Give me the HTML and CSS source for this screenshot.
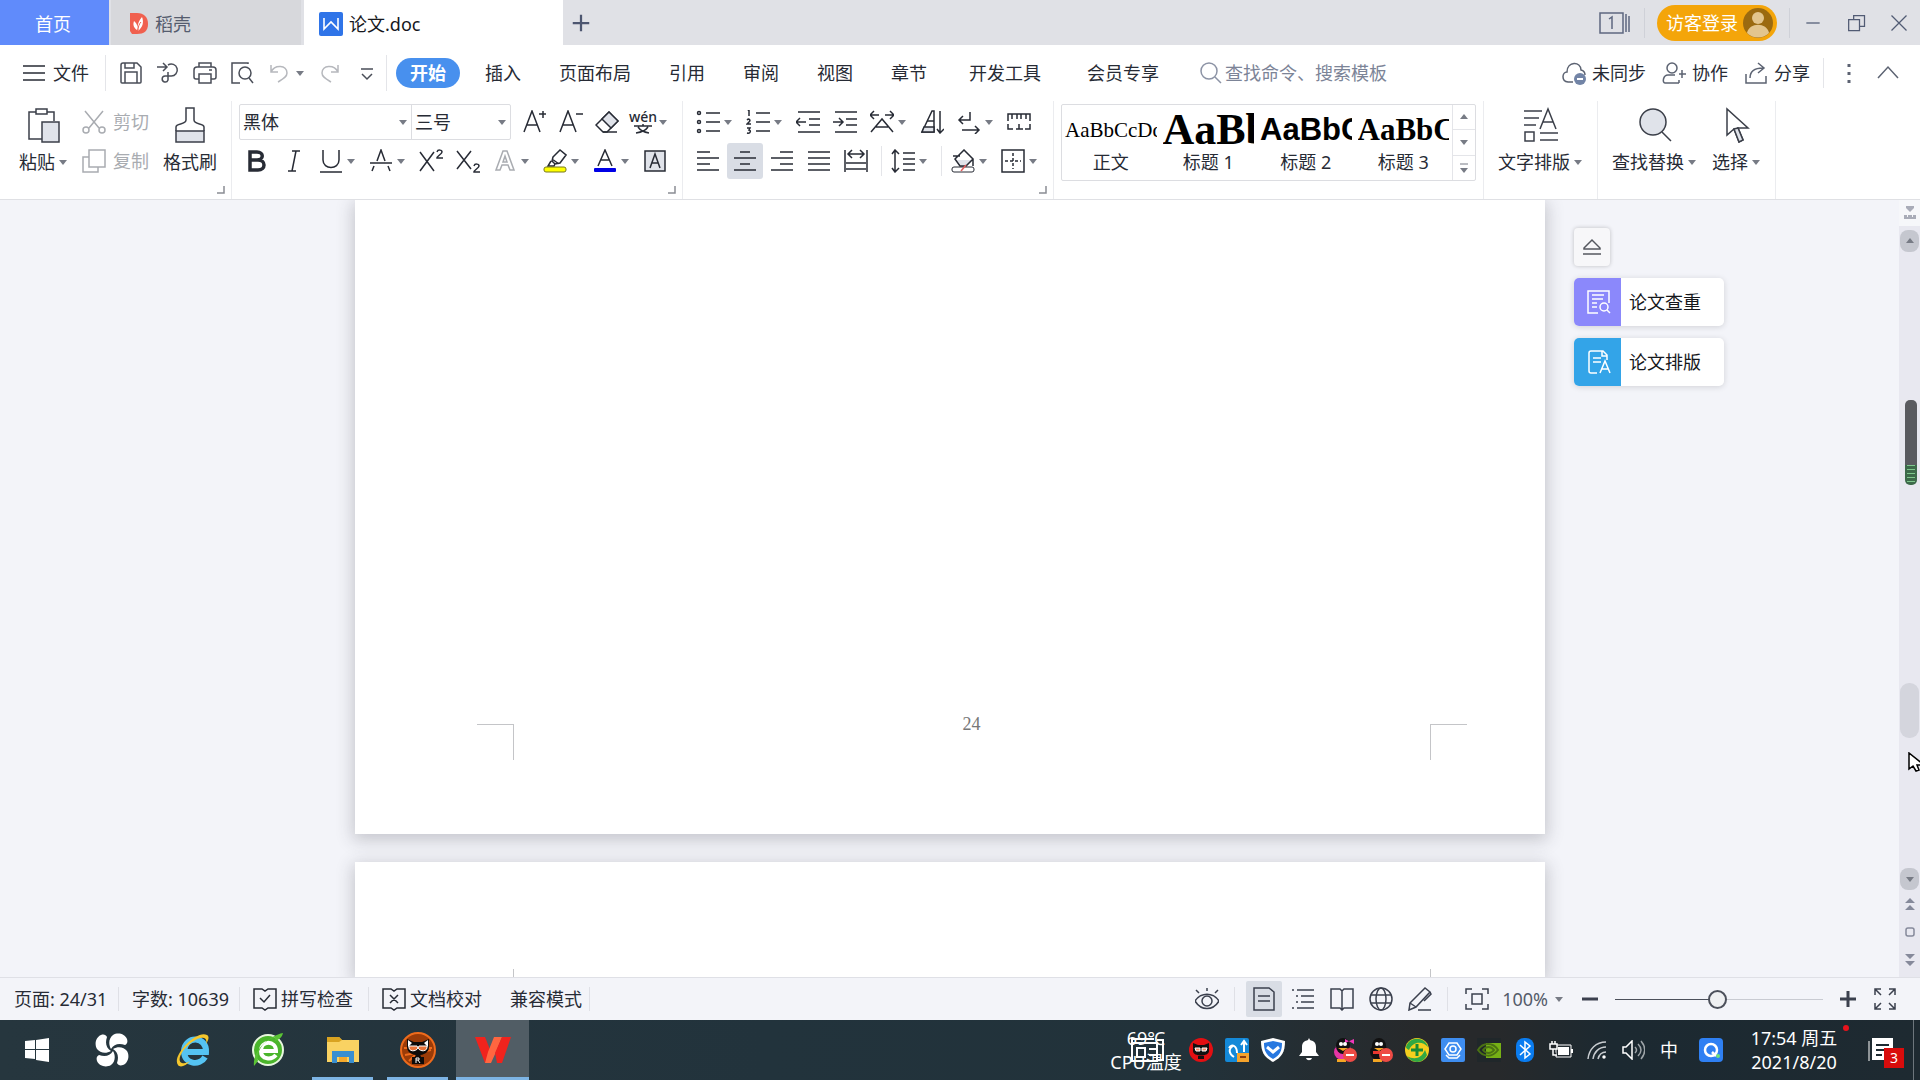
FILE: index.html
```html
<!DOCTYPE html>
<html lang="zh-CN">
<head>
<meta charset="utf-8">
<title>论文.doc</title>
<link rel="stylesheet" href="styles.css">
</head>
<body>
<svg class="defs" aria-hidden="true">
  <symbol id="caret" viewBox="0 0 10 10"><path d="M1 3h8L5 8z" fill="#777b85"/></symbol>
  <symbol id="corner" viewBox="0 0 8 8"><path d="M7 0v7H0" fill="none" stroke="#8a8d94" stroke-width="1.5"/></symbol>
</svg>

<header class="titlebar">
  <button class="tab tab-home">首页</button>
  <button class="tab tab-shell">
    <svg width="20" height="24" viewBox="0 0 20 24"><path d="M1 1h7c7 0 11 4 11 11s-4 10-11 10H3L1 19z" fill="#f0604f"/><path d="M8 18c-4-3-4-6-3-9 3 3 4 5 3 9zm1 1c-1-5 0-9 4-14 2 5 1 10-4 14z" fill="#fff"/><path d="M9 19c0-4 1-7 3-9" fill="none" stroke="#f0604f"/></svg>
    <span>稻壳</span>
  </button>
  <button class="tab tab-doc">
    <svg width="24" height="24" viewBox="0 0 24 24"><rect width="24" height="24" rx="2" fill="#2f74e8"/><path d="M5 6v11l7-7 7 7V6" fill="none" stroke="#fff" stroke-width="1.6"/></svg>
    <span>论文.doc</span>
  </button>
  <button class="tab-add" aria-label="新建"><svg class="i" viewBox="0 0 24 24"><path d="M12 1v22M1 12h22" stroke-width="3"/></svg></button>
  <div class="window-tools">
    <button class="count" aria-label="窗口"><svg width="32" height="22" viewBox="0 0 32 22" fill="none" stroke="#5d6780" stroke-width="1.5"><path d="M1 1h23v20H1zM27 2v18M30 4v16M10 7l3-2v12"/></svg></button>
    <button class="login"><span>访客登录</span><svg width="30" height="30" viewBox="0 0 30 30"><circle cx="15" cy="15" r="15" fill="#9b6a10"/><circle cx="15" cy="10" r="6" fill="#e3c58d"/><path d="M4 25c2-11 20-11 22 0-6 6-16 6-22 0z" fill="#e3c58d"/></svg></button>
    <button class="win" aria-label="最小化"><svg class="i" viewBox="0 0 24 24"><path d="M4 12h16"/></svg></button>
    <button class="win" aria-label="还原"><svg class="i" viewBox="0 0 24 24"><path d="M2 8h13v13H2zM8 8V3h13v13h-6"/></svg></button>
    <button class="win" aria-label="关闭"><svg class="i" viewBox="0 0 24 24"><path d="M3 3l18 18M21 3L3 21"/></svg></button>
  </div>
</header>

<nav class="menubar">
  <button class="file"><svg class="i" viewBox="0 0 24 24"><path d="M1 5h22M1 12h22M1 19h22"/></svg><span>文件</span></button>
  <div class="quick">
    <button aria-label="保存"><svg class="i" viewBox="0 0 24 24"><path d="M4 2h14l4 4v15a1 1 0 0 1-1 1H3a1 1 0 0 1-1-1V4a2 2 0 0 1 2-2zM6 22V11h12v11M6 2v5h9V2"/></svg></button>
    <button aria-label="输出"><svg class="i" viewBox="0 0 24 24"><path d="M1 6h9M7 2l4 4-4 4M9 15h6a6 6 0 1 0-3-11M12 11v8a3 3 0 1 1-3-4"/></svg></button>
    <button aria-label="打印"><svg class="i" viewBox="0 0 24 24"><path d="M6 6V2h12v4M6 18H3a2 2 0 0 1-2-2V9a3 3 0 0 1 3-3h16a3 3 0 0 1 3 3v7a2 2 0 0 1-2 2h-3M6 13h12v9H6zM16 9h3"/></svg></button>
    <button aria-label="预览"><svg class="i" viewBox="0 0 24 24"><path d="M18 3V2H2v20h8"/><circle cx="15" cy="12" r="6"/><path d="M19 17l4 5"/></svg></button>
    <button class="dim" aria-label="撤销"><svg class="i" viewBox="0 0 24 24"><path d="M4 4v7h7M4 11c4-8 16-7 16 1 0 4-4 6-9 9"/></svg><svg class="c"><use href="#caret"/></svg></button>
    <button class="dim" aria-label="恢复"><svg class="i" viewBox="0 0 24 24"><path d="M20 4v7h-7M20 11c-4-8-16-7-16 1 0 4 4 6 9 9"/></svg></button>
    <button aria-label="更多"><svg class="i" viewBox="0 0 24 24"><path d="M6 8h12M7 13l5 5 5-5"/></svg></button>
  </div>
  <div class="menus">
    <button class="menu active">开始</button>
    <button class="menu">插入</button>
    <button class="menu">页面布局</button>
    <button class="menu">引用</button>
    <button class="menu">审阅</button>
    <button class="menu">视图</button>
    <button class="menu">章节</button>
    <button class="menu wide">开发工具</button>
    <button class="menu wide">会员专享</button>
  </div>
  <label class="search"><svg width="22" height="24" viewBox="0 0 22 24" fill="none" stroke="#8c93a5" stroke-width="1.5"><circle cx="9" cy="10" r="8"/><path d="M15 16l6 6"/></svg><input type="text" placeholder="查找命令、搜索模板" aria-label="搜索"></label>
  <div class="share">
    <button><svg class="i" viewBox="0 0 24 24"><path d="M11 21H6C-1 20 0 11 5 11 5 0 19 0 19 9c4 1 4 4 4 5"/><circle cx="18" cy="18" r="6" fill="#7284a6" stroke="none"/><path d="M15 18h6" stroke="#fff" stroke-width="2"/></svg><span>未同步</span></button>
    <button><svg class="i" viewBox="0 0 24 24"><circle cx="10" cy="7" r="5"/><path d="M17 22H3c-3 0-2-8 3-8h7M17 13h7M20 9v8M17 19v3"/></svg><span>协作</span></button>
    <button><svg class="i" viewBox="0 0 24 24"><path d="M2 13v9h20v-7M6 17c0-7 5-10 13-10M14 2l6 5-6 5"/></svg><span>分享</span></button>
  </div>
  <button class="more" aria-label="更多选项"><svg class="i" viewBox="0 0 24 24"><path d="M12 3v3M12 11v3M12 19v3" stroke-width="3"/></svg></button>
  <button class="fold" aria-label="收起"><svg class="i" viewBox="0 0 24 24"><path d="M2 17L12 6l10 11"/></svg></button>
</nav>

<section class="ribbon">
  <div class="group g-clip">
    <button class="big"><svg class="bi" viewBox="0 0 36 36"><path d="M12 5H3v27h14M20 5h8v9"/><path d="M10 2h11v5H10z" fill="#fff"/><path d="M16 15h17v20H16z" fill="#e0e3ea"/></svg><span>粘贴<svg class="c"><use href="#caret"/></svg></span></button>
    <div class="pair">
      <button class="line dim"><svg class="i" viewBox="0 0 24 24"><path d="M3 1l14 17M21 1L7 18"/><circle cx="4" cy="20" r="3"/><circle cx="20" cy="20" r="3"/></svg><span>剪切</span></button>
      <button class="line dim"><svg class="i" viewBox="0 0 24 24"><path d="M7 1h16v17H7zM7 8H1v15h15v-5"/></svg><span>复制</span></button>
    </div>
    <button class="big"><svg class="bi" viewBox="0 0 36 36"><path d="M4 24h28v11H4z" fill="#e0e3ea"/><path d="M4 24v-4c0-4 10-2 10-7V1h8v12c0 5 10 3 10 7v4"/></svg><span>格式刷</span></button>
    <svg class="launch"><use href="#corner"/></svg>
  </div>
  <div class="group g-font">
    <div class="row tight">
      <div class="fontbox">
        <label class="sel sel-name"><select aria-label="字体"><option>黑体</option></select><svg class="c"><use href="#caret"/></svg></label>
        <label class="sel sel-size"><select aria-label="字号"><option>三号</option></select><svg class="c"><use href="#caret"/></svg></label>
      </div>
      <button class="ib" aria-label="增大"><svg class="i" viewBox="0 0 24 24"><path d="M1 22L9 1l8 21M4 15h10M16 4h7M20 1v7"/></svg></button>
      <button class="ib" aria-label="减小"><svg class="i" viewBox="0 0 24 24"><path d="M1 22L9 1l8 21M4 15h10M17 4h7"/></svg></button>
      <button class="ib" aria-label="清除"><svg class="i" viewBox="0 0 24 24"><path d="M1 15L14 2l9 9-11 11H8z"/><path d="M7 9l7-7 9 9-7 7z" fill="#e0e3ea"/><path d="M8 22h14"/></svg></button>
      <button class="ib" aria-label="拼音"><span class="pinyin"><b>wén</b><svg width="18" height="10" viewBox="0 0 18 10" fill="none" stroke="#272b35" stroke-width="1.5"><path d="M0 2h18M9 0v2M4 3c2 3 5 5 11 6M14 3C12 6 9 8 2 9"/></svg></span><svg class="c"><use href="#caret"/></svg></button>
    </div>
    <div class="row under">
      <button class="ib" aria-label="加粗"><svg class="i" viewBox="0 0 24 24"><path d="M5 3h7c7 0 7 8 0 8H5zM5 11h8c8 0 8 10 0 10H5z" stroke-width="3.5"/></svg></button>
      <button class="ib" aria-label="倾斜"><svg class="i" viewBox="0 0 24 24"><path d="M10 2h8M6 22h8M14 2l-4 20"/></svg></button>
      <button class="ib" aria-label="下划线"><svg class="i" viewBox="0 0 24 24"><path d="M4 1v10c0 10 16 10 16 0V1M1 23h22"/></svg><svg class="c"><use href="#caret"/></svg></button>
      <button class="ib" aria-label="删除线"><svg class="i" viewBox="0 0 24 24"><path d="M8 12l4-11 4 11M5 17l-2 5M19 17l2 5M1 14h22"/></svg><svg class="c"><use href="#caret"/></svg></button>
      <button class="ib" aria-label="上标"><svg class="i" viewBox="0 0 24 24"><path d="M1 3l14 19M15 3L1 22M18 3c1-3 5-2 5 0s-5 4-5 6h6"/></svg></button>
      <button class="ib" aria-label="下标"><svg class="i" viewBox="0 0 24 24"><path d="M1 2l14 18M15 2L1 20M18 17c1-3 5-2 5 0s-5 4-5 6h6"/></svg></button>
      <button class="ib dim" aria-label="文字效果"><svg class="i" viewBox="0 0 24 24"><path d="M3 21L10 2h4l7 19h-4l-2-5H9l-2 5zM10 13h4l-2-6z"/></svg><svg class="c"><use href="#caret"/></svg></button>
      <button class="ib" aria-label="突出显示"><svg class="i" viewBox="0 0 24 24"><path d="M10 8l7-7 6 5-6 8-5 1-3-3zM9 10l7 5M8 12l-3 5h6l1-2"/><rect x="1" y="18" width="22" height="5" rx="2" fill="#ff0" stroke="#77791f" stroke-width="1"/></svg><svg class="c"><use href="#caret"/></svg></button>
      <button class="ib" aria-label="字体颜色"><svg class="i" viewBox="0 0 24 24"><path d="M5 17l7-16 7 16M8 11h8"/><rect x="1" y="19" width="22" height="4" rx="1" fill="#0000e6" stroke="none"/></svg><svg class="c"><use href="#caret"/></svg></button>
      <button class="ib" aria-label="字符底纹"><svg class="i" viewBox="0 0 24 24"><path d="M2 2h20v20H2z" fill="#e0e3ea"/><path d="M7 19l5-14 5 14M9 14h6"/></svg></button>
    </div>
    <svg class="launch"><use href="#corner"/></svg>
  </div>
  <div class="group g-para">
    <div class="row">
      <button class="ib" aria-label="项目符号"><svg class="i" viewBox="0 0 24 24"><path d="M10 3h14M10 12h14M10 21h14"/><circle cx="3" cy="3" r="1.5"/><circle cx="3" cy="12" r="1.5"/><circle cx="3" cy="21" r="1.5"/></svg><svg class="c"><use href="#caret"/></svg></button>
      <button class="ib" aria-label="编号"><svg class="i" viewBox="0 0 24 24"><path d="M10 3h14M10 12h14M10 21h14M2 1l1-1v6M1 10c2-2 4 0 2 2l-2 2h4M1 18h3l-1 2c2 0 2 4-2 3"/></svg><svg class="c"><use href="#caret"/></svg></button>
      <button class="ib" aria-label="减少缩进"><svg class="i" viewBox="0 0 24 24"><path d="M2 2h22M13 9h11M13 15h11M2 22h22M0 12h10M4 8l-4 4 4 4"/></svg></button>
      <button class="ib" aria-label="增加缩进"><svg class="i" viewBox="0 0 24 24"><path d="M2 2h22M13 9h11M13 15h11M2 22h22M0 12h9M6 8l4 4-4 4"/></svg></button>
      <button class="ib" aria-label="中文版式"><svg class="i" viewBox="0 0 24 24"><path d="M0 5h9M4 1L0 5l4 4M24 5h-9M20 1l4 4-4 4M1 22L12 9l11 13M6 17h12"/></svg><svg class="c"><use href="#caret"/></svg></button>
      <button class="ib" aria-label="排序"><svg class="i" viewBox="0 0 24 24"><path d="M2 22L12 1h2v21z"/><path d="M4 17h10v5H2z" fill="#e0e3ea"/><path d="M7 11h7M20 1v21M17 19l3 4 4-4"/></svg></button>
      <button class="ib" aria-label="换行"><svg class="i" viewBox="0 0 24 24"><path d="M13 2v8H2M6 6l-4 4 4 4M5 20h17M18 16l4 4-4 4"/></svg><svg class="c"><use href="#caret"/></svg></button>
      <button class="ib" aria-label="制表位"><svg class="i" viewBox="0 0 24 24"><path d="M1 11V4h22v7M5 4v5M10 4v5M14 4v5M19 4v5M1 14v5h5M9 19h7M12 14v5M18 19h5v-5"/></svg></button>
    </div>
    <div class="row">
      <button class="ib" aria-label="左对齐"><svg class="i" viewBox="0 0 24 24"><path d="M1 3h13M1 9h22M1 15h13M1 21h22"/></svg></button>
      <button class="ib on" aria-label="居中"><svg class="i" viewBox="0 0 24 24"><path d="M7 3h10M1 9h22M7 15h10M1 21h22"/></svg></button>
      <button class="ib" aria-label="右对齐"><svg class="i" viewBox="0 0 24 24"><path d="M10 3h13M1 9h22M10 15h13M1 21h22"/></svg></button>
      <button class="ib" aria-label="两端对齐"><svg class="i" viewBox="0 0 24 24"><path d="M1 3h22M1 9h22M1 15h22M1 21h22"/></svg></button>
      <button class="ib" aria-label="分散对齐"><svg class="i" viewBox="0 0 24 24"><path d="M1 1v22M23 1v22M5 5h14M8 1L4 5l4 4M16 1l4 4-4 4M2 14h20M2 20h20"/></svg></button>
      <i class="bar"></i>
      <button class="ib" aria-label="行距"><svg class="i" viewBox="0 0 24 24"><path d="M4 1v22M1 5l3-4 4 4M1 19l3 4 4-4M12 4h12M12 10h12M12 15h12M12 21h12"/></svg><svg class="c"><use href="#caret"/></svg></button>
      <i class="bar"></i>
      <button class="ib" aria-label="底纹"><svg class="i" viewBox="0 0 24 24"><path d="M6 11h16l-7 7h-4z" fill="#e0e3ea" stroke="none"/><path d="M2 7h7M4 10l9-9 9 9-7 7H9zM22 10v7"/><rect x="1" y="18" width="22" height="5" rx="2" stroke-width="1"/><path d="M10 22l5-6" stroke="#e06060"/></svg><svg class="c"><use href="#caret"/></svg></button>
      <button class="ib" aria-label="边框"><svg class="i" viewBox="0 0 24 24"><path d="M1 1h22v22H1z"/><path d="M12 4v16M4 12h16" stroke-dasharray="3 2"/></svg><svg class="c"><use href="#caret"/></svg></button>
    </div>
    <svg class="launch"><use href="#corner"/></svg>
  </div>
  <div class="group g-style">
    <div class="gallery">
      <button class="style"><span class="sample s-body">AaBbCcDd</span><span>正文</span></button>
      <button class="style"><span class="sample s-h1">AaBb</span><span>标题 1</span></button>
      <button class="style"><span class="sample s-h2">AaBbC</span><span>标题 2</span></button>
      <button class="style"><span class="sample s-h3">AaBbC</span><span>标题 3</span></button>
      <div class="spin">
        <button aria-label="上一行"><svg class="c flip"><use href="#caret"/></svg></button>
        <button aria-label="下一行"><svg class="c"><use href="#caret"/></svg></button>
        <button aria-label="展开"><svg width="10" height="12" viewBox="0 0 10 12"><path d="M1 2h8" stroke="#777b85"/><path d="M1 6h8l-4 5z" fill="#777b85"/></svg></button>
      </div>
    </div>
  </div>
  <div class="group g-tools">
    <button class="big"><svg class="bi" viewBox="0 0 36 36"><path d="M1 4h18M1 11h15M1 18h12M17 22l8-20 8 20M20 15h10M2 25h9v9H2zM17 26h18M17 33h18"/></svg><span>文字排版<svg class="c"><use href="#caret"/></svg></span></button>
  </div>
  <div class="group g-tools">
    <button class="big"><svg class="bi" viewBox="0 0 36 36"><circle cx="16" cy="15" r="13" fill="#e0e3ea"/><path d="M25 25l9 9"/></svg><span>查找替换<svg class="c"><use href="#caret"/></svg></span></button>
    <button class="big"><svg class="bi" viewBox="0 0 36 36"><path d="M8 2v26l7-6 5 13 4-2-5-12h10z" fill="#fff"/><path d="M15 22l4-1 5 12-4 2z" fill="#e0e3ea"/></svg><span>选择<svg class="c"><use href="#caret"/></svg></span></button>
  </div>
</section>

<main class="workspace">
  <div class="canvas">
    <article class="page first">
      <div class="page-foot"><i class="crop-left"></i><span>24</span><i class="crop-right"></i></div>
    </article>
    <article class="page second"><i></i></article>
    <aside class="float">
      <button class="eject" aria-label="收起"><svg width="20" height="20" viewBox="0 0 20 20" fill="none" stroke="#55585f" stroke-width="1.5"><path d="M2 11l8-8 8 8v1H2zM1 17h18"/></svg></button>
      <button class="card violet"><span class="badge"><svg class="i" viewBox="0 0 24 24"><path d="M11 23H1V1h21v12M5 5h12M5 9h11M5 13h5M5 17h5"/><circle cx="17" cy="17" r="4"/><path d="M20 20l3 3"/></svg></span><span>论文查重</span></button>
      <button class="card azure"><span class="badge"><svg class="i" viewBox="0 0 24 24"><path d="M10 23H4a2 2 0 0 1-2-2V3a2 2 0 0 1 2-2h12l4 4v5M15 1v5h5M6 8h8M6 12h8M13 23l5-12 5 12M15 19h6"/></svg></span><span>论文排版</span></button>
    </aside>
  </div>
  <div class="scroller">
    <button class="ruler" aria-label="标尺"><svg width="14" height="14" viewBox="0 0 14 14"><path d="M3 0h8v2L7 6 3 2zM1 9h3v2h1V9h4v2h1V9h3v4H1z" fill="#a9acb8"/></svg></button>
    <button class="pad" aria-label="向上"><svg class="c flip"><use href="#caret"/></svg></button>
    <div class="track"><i class="thumb"></i><i class="meter"></i>
      <svg class="cursor" width="12" height="20" viewBox="0 0 12 20"><path d="M1 1v16l4-3 3 5 3-1-2-5h7z" fill="#fff" stroke="#000" stroke-width="1.5"/></svg>
    </div>
    <button class="pad" aria-label="向下"><svg class="c"><use href="#caret"/></svg></button>
    <button class="jump" aria-label="上一页"><svg width="10" height="12" viewBox="0 0 10 12"><path d="M0 5l5-5 5 5zM0 12l5-5 5 5z" fill="#85899a"/></svg></button>
    <button class="jump" aria-label="选择对象"><svg width="10" height="10" viewBox="0 0 10 10"><rect x="1" y="1" width="8" height="8" rx="2" fill="none" stroke="#85899a" stroke-width="1.5"/></svg></button>
    <button class="jump" aria-label="下一页"><svg width="10" height="12" viewBox="0 0 10 12"><path d="M0 0l5 5 5-5zM0 7l5 5 5-5z" fill="#85899a"/></svg></button>
  </div>
</main>

<footer class="statusbar">
  <span class="stat s1">页面: 24/31</span>
  <span class="stat s2">字数: 10639</span>
  <button class="stat s3"><svg class="i" viewBox="0 0 24 24"><path d="M1 2h8l3 2 3-2h8v19h-8l-3 2-3-2H1zM7 11l4 4 6-7"/></svg><span>拼写检查</span></button>
  <button class="stat s4"><svg class="i" viewBox="0 0 24 24"><path d="M1 2h8l3 2 3-2h8v19h-8l-3 2-3-2H1zM8 8l8 8M16 8l-8 8"/></svg><span>文档校对</span></button>
  <span class="stat s5">兼容模式</span>
  <div class="views">
    <button class="v" aria-label="护眼"><svg class="i" viewBox="0 0 24 24"><path d="M0 14c6-9 18-9 24 0-6 10-18 10-24 0zM12 1v3M1 3l3 3M23 3l-3 3"/><circle cx="12" cy="14" r="5"/></svg></button>
    <i class="vs"></i>
    <button class="v on" aria-label="页面视图"><svg class="i" viewBox="0 0 24 24"><path d="M2 1h15l5 4v18H2zM6 9h12M6 14h12"/></svg></button>
    <button class="v" aria-label="大纲"><svg class="i" viewBox="0 0 24 24"><path d="M1 3h2M6 3h17M5 9h2M10 9h13M5 15h2M10 15h13M1 21h2M6 21h17"/></svg></button>
    <button class="v" aria-label="阅读"><svg class="i" viewBox="0 0 24 24"><path d="M1 2h9l2 2 2-2h9v19h-9l-2 2-2-2H1zM12 4v18"/></svg></button>
    <button class="v" aria-label="网页"><svg class="i" viewBox="0 0 24 24"><circle cx="12" cy="12" r="11"/><ellipse cx="12" cy="12" rx="5" ry="11"/><path d="M2 8h20M2 16h20"/></svg></button>
    <button class="v" aria-label="批注"><svg class="i" viewBox="0 0 24 24"><path d="M2 16L17 1l5 4L8 20l-7 3zM2 16l6 4M10 23h13M22 5l1 2-7 7"/></svg></button>
    <i class="vs"></i>
    <button class="v" aria-label="适应"><svg class="i" viewBox="0 0 24 24"><path d="M1 7V2h6M17 2h6v5M23 17v5h-6M7 22H1v-5M7 7h10v10H7z"/></svg></button>
    <button class="zoom">100%<svg class="c"><use href="#caret"/></svg></button>
    <button class="z" aria-label="缩小"><svg class="i" viewBox="0 0 24 24"><path d="M4 12h16" stroke-width="3"/></svg></button>
    <input class="range" type="range" min="0" max="100" value="49" aria-label="缩放">
    <button class="z" aria-label="放大"><svg class="i" viewBox="0 0 24 24"><path d="M4 12h16M12 4v16" stroke-width="3"/></svg></button>
    <button class="z" aria-label="全屏"><svg class="i" viewBox="0 0 24 24"><path d="M2 8V2h6M2 2l6 6M16 2h6v6M22 2l-6 6M22 16v6h-6M22 22l-6-6M8 22H2v-6M2 22l6-6"/></svg></button>
  </div>
</footer>

<div class="taskbar">
  <button class="app" aria-label="开始菜单"><svg width="24" height="24" viewBox="0 0 24 24"><path d="M0 3l10-1v9H0zM11 2l13-2v11H11zM0 12h10v9L0 20zM11 12h13v12l-13-2z" fill="#fff"/></svg></button>
  <button class="app" aria-label="助手"><svg width="34" height="34" viewBox="0 0 34 34" fill="#fff"><path d="M16 16c-3-5-2-11 2-14 5-3 12-1 14 4 1 3 0 5-2 6-6-2-11-1-14 4z"/><path d="M18 16c5-3 11-2 14 2 3 5 1 12-4 14-3 1-5 0-6-2 2-6 1-11-4-14z"/><path d="M18 18c3 5 2 11-2 14-5 3-12 1-14-4-1-3 0-5 2-6 6 2 11 1 14-4z"/><path d="M16 18c-5 3-11 2-14-2C-1 11 1 4 6 2c3-1 5 0 6 2-2 6-1 11 4 14z"/></svg></button>
  <button class="app apart" aria-label="浏览器"><svg width="36" height="36" viewBox="0 0 36 36" fill="none"><path d="M10 20h21c1-16-21-17-22-1 0 14 16 15 21 6" stroke="#55c3f2" stroke-width="6"/><path d="M3 33C-4 24 22-3 32 3c3 2 1 6-1 9 2-8-5-8-14-2C7 17 1 29 7 31c3 1 6-1 8-2-4 5-10 7-12 4z" fill="#f4c62d"/></svg></button>
  <button class="app" aria-label="安全浏览器"><svg width="36" height="36" viewBox="0 0 36 36" fill="none"><circle cx="18" cy="18" r="15" fill="#4ab52b" stroke="#e8f7df" stroke-width="2"/><path d="M11 19h15c0-11-15-11-15 0 0 9 11 9 15 4" stroke="#fff" stroke-width="4"/><path d="M4 34C2 20 18 4 33 1c-1 5-5 7-8 8 1-2 1-4-2-3C14 9 6 19 8 29z" fill="#5ac335"/></svg></button>
  <button class="app open" aria-label="文件管理器"><svg width="34" height="28" viewBox="0 0 34 28"><path d="M1 1h12l3 3h17v22H1z" fill="#f9d262"/><path d="M1 1h12l3 3-3 2H1z" fill="#d9a321"/><path d="M6 27V15h22v12h-5v-6H11v6z" fill="#3a8fd0"/><path d="M13 21h8v5h-8z" fill="#f6a92b"/></svg></button>
  <button class="app open" aria-label="猫"><svg width="36" height="36" viewBox="0 0 36 36"><circle cx="18" cy="18" r="17" fill="#9a3b08" stroke="#ee6b1c" stroke-width="2"/><path d="M4 16h28M5 23l26-5M9 29L29 9" stroke="#ee6b1c" stroke-width="2"/><path d="M7 7l7 3h8l7-3v8c0 11-22 11-22 0z" fill="#0d0b0a"/><path d="M8 8l4 3-4 4zM28 8l-4 3 4 4z" fill="#fff"/><path d="M16 22h4l1 3h3v7H12v-7h3z" fill="#0d0b0a"/><path d="M9 14h8l1 2 1-2h8c1 6-7 6-9 2-2 4-10 4-9-2z" fill="#e9743a" stroke="#fff"/><path d="M16 31v-5h3v2h-3M18 28l2 3" fill="none" stroke="#fff"/></svg></button>
  <button class="app open current" aria-label="文字处理"><svg width="38" height="28" viewBox="0 0 38 28"><path d="M1 1h10l6 15-3 11h-3z" fill="#f0231d"/><path d="M11 27l3-11 6-15h8l-6 15-5 11z" fill="#ff6640"/><path d="M28 1h9L28 27h-5l-2-10z" fill="#f0231d"/></svg></button>

  <div class="tray">
    <div class="temp"><span>69℃</span><span>CPU温度</span><svg width="38" height="26" viewBox="0 0 38 26" fill="none" stroke="#fff" stroke-width="2"><path d="M3 6h25v18H3zM8 11h8v9H8zM28 3h6v20h-6M3 6V2h22M20 12h8M20 18h8"/></svg></div>
    <span class="ti"><svg width="24" height="24" viewBox="0 0 24 24"><circle cx="12" cy="12" r="12" fill="#e30f12"/><path d="M4 5l5 2h6l5-2v8c0 6-16 6-16 0z" fill="#111"/><path d="M6 10h5v3H7zM13 10h5l-1 3h-4z" fill="#f28c6a" stroke="#fff"/><path d="M9 18h6v3H9z" fill="#111"/></svg></span>
    <span class="ti"><svg width="24" height="24" viewBox="0 0 24 24"><rect width="24" height="24" rx="2" fill="#1489d8"/><path d="M4 10c3-5 8-2 8 5M8 8c-5 3-4 8 1 11M19 4v10M16 7l3-4 3 4" fill="none" stroke="#fff" stroke-width="2"/><path d="M12 15h12v9H12z" fill="#f5a32b"/><path d="M15 19h6" stroke="#8b3c10" stroke-width="2"/></svg></span>
    <span class="ti"><svg width="24" height="24" viewBox="0 0 24 24"><path d="M12 0l12 3c0 11-3 16-12 21C3 19 0 14 0 3z" fill="#fff"/><path d="M12 3l9 2c0 8-2 12-9 16C5 17 3 13 3 5z" fill="#2878e0"/><path d="M6 9l6 5 6-5" fill="none" stroke="#fff" stroke-width="3"/></svg></span>
    <span class="ti"><svg width="22" height="24" viewBox="0 0 22 24" fill="#fff"><path d="M1 18l3-4V9c0-5 3-6 6-7l1-2 1 2c3 1 6 2 6 7v5l3 4zM8 20h6c-1 3-5 3-6 0z"/></svg></span>
    <span class="ti"><svg width="24" height="24" viewBox="0 0 24 24"><ellipse cx="10" cy="14" rx="9" ry="8" fill="#e735a5"/><ellipse cx="10" cy="8" rx="7" ry="8" fill="#111"/><path d="M12 1l9 5V1l-9 4z" fill="#f238bb"/><circle cx="8" cy="6" r="2" fill="#fff"/><circle cx="12" cy="6" r="2" fill="#fff"/><path d="M5 10h10l-5 3zM4 21h9v3H4z" fill="#f4a623"/><circle cx="17" cy="17" r="7" fill="#ee4b45"/><path d="M13 17h8" stroke="#fff" stroke-width="2"/></svg></span>
    <span class="ti"><svg width="24" height="24" viewBox="0 0 24 24"><ellipse cx="10" cy="14" rx="9" ry="8" fill="#111"/><ellipse cx="10" cy="8" rx="7" ry="8" fill="#111"/><circle cx="8" cy="6" r="2" fill="#fff"/><circle cx="12" cy="6" r="2" fill="#fff"/><path d="M5 10h10l-5 3zM4 21h9v3H4z" fill="#f4a623"/><path d="M4 13h12v3H4z" fill="#e83830"/><circle cx="17" cy="17" r="7" fill="#ee4b45"/><path d="M13 17h8" stroke="#fff" stroke-width="2"/></svg></span>
    <span class="ti"><svg width="24" height="24" viewBox="0 0 24 24"><circle cx="12" cy="12" r="12" fill="#f5cf1e"/><path d="M1 9C4-2 20-2 23 9 17 2 7 4 4 12c-2-1-3-2-3-3zM22 17c-4 9-15 9-20 1 7 4 14 3 18-6z" fill="#31a843"/><path d="M12 6v12M6 12h12" stroke="#188a35" stroke-width="3"/></svg></span>
    <span class="ti"><svg width="24" height="24" viewBox="0 0 24 24"><rect width="24" height="24" rx="2" fill="#3e8df0"/><g fill="none" stroke="#fff" stroke-width="1.5"><path d="M8 5h8l4 6-4 6H8l-4-6zM5 17l3 3h8l3-3"/><circle cx="12" cy="11" r="3"/></g></svg></span>
    <span class="ti"><svg width="24" height="24" viewBox="0 0 24 24"><rect width="24" height="24" fill="#20272a"/><path d="M9 5h15v15H9z" fill="#76b015"/><path d="M1 12c5-8 15-8 20 0-6 8-15 7-20 0zM6 12c3-4 8-4 11 0-3 4-8 4-11 0z" fill="none" stroke="#4b7114" stroke-width="2"/></svg></span>
    <span class="ti"><svg width="18" height="24" viewBox="0 0 18 24"><rect width="18" height="24" rx="8" fill="#0a7cf0"/><path d="M4 7l10 9-5 4V4l5 4-10 9" fill="none" stroke="#fff" stroke-width="1.5"/></svg></span>
    <span class="ti"><svg width="24" height="20" viewBox="0 0 24 20"><path d="M7 5h15v12H7z" fill="none" stroke="#fff"/><path d="M9 7h11v8H9zM22 9h2v4h-2z" fill="#fff"/><path d="M1 4h7v5H1zM3 1v3M6 1v3M4 9v6h4" fill="#23282c" stroke="#fff" stroke-width="1.5"/></svg></span>
    <span class="ti"><svg width="20" height="20" viewBox="0 0 20 20" fill="none" stroke="#c8ccd0" stroke-width="1.5"><path d="M1 19C2 9 9 2 19 2M6 19C7 12 12 7 19 7M11 19c1-4 4-7 8-7"/><circle cx="17" cy="17" r="1" fill="#fff" stroke="#fff"/></svg></span>
    <span class="ti"><svg width="24" height="20" viewBox="0 0 24 20" fill="none" stroke="#fff" stroke-width="1.5"><path d="M2 7h3l6-6v18l-6-6H2z"/><path d="M14 7c2 2 2 4 0 6M17 4c4 4 4 8 0 12M20 1c5 6 5 12 0 18" stroke="#9ea4a8"/></svg></span>
    <span class="ti ime">中</span>
    <span class="ti apart"><svg width="24" height="24" viewBox="0 0 24 24"><rect width="24" height="24" rx="4" fill="#2f80f3"/><circle cx="12" cy="12" r="6" fill="none" stroke="#fff" stroke-width="2.5"/><path d="M13 14l4 4" stroke="#fff" stroke-width="2.5"/><circle cx="19" cy="18" r="2" fill="#6fe07a"/></svg></span>
    <time class="clock"><span>17:54 周五</span><span>2021/8/20</span><i></i></time>
    <button class="notice" aria-label="通知"><svg width="26" height="26" viewBox="0 0 26 26"><path d="M4 1h21v22H4z" fill="#fff"/><path d="M8 8h13M8 13h13M8 18h6" stroke="#1d2a32" stroke-width="2"/><path d="M1 4v20" stroke="#fff"/></svg><b>3</b></button>
    <i class="edge"></i>
  </div>
</div>
</body>
</html>
```
FILE: styles.css
```css
* { box-sizing: border-box; }
html, body { height: 100%; }
body {
  margin: 0;
  display: flex;
  flex-direction: column;
  overflow: hidden;
  background: #fff;
  color: #272b35;
  font: 18px/24px "Noto Sans", "Noto Sans CJK SC", sans-serif;
}
button, input, select { font: inherit; color: inherit; }
button {
  display: flex;
  align-items: center;
  padding: 0;
  border: 0;
  background: none;
  white-space: nowrap;
}
svg { flex: none; display: block; }
.defs { position: absolute; width: 0; height: 0; }
.i { width: 24px; height: 24px; fill: none; stroke: currentColor; stroke-width: 1.5; }
.c { width: 10px; height: 10px; }
.flip { transform: rotate(180deg); }
.dim { color: #a9acb1; }

/* title bar */
.titlebar { flex: none; display: flex; height: 45px; background: #e0e1e6; color: #4d5670; }
.tab { height: 45px; padding-top: 3px; gap: 6px; }
.tab-home { width: 109px; padding-right: 3px; justify-content: center; background: #608bfb; color: #fff; }
.tab-shell { width: 190px; margin: 0 3px 0 2px; padding-left: 18px; background: #d7d8dc; color: #555c6e; }
.tab-doc { width: 259px; padding-left: 15px; background: #fff; color: #16181d; }
.tab-add { width: 36px; justify-content: center; }
.tab-add .i { width: 18px; height: 18px; }
.window-tools { display: flex; align-items: center; margin-left: auto; }
.count { height: 30px; padding-right: 13px; border-right: 1px solid #cfd1d8; }
.login { height: 36px; margin: 0 12px 0 12px; padding: 0 4px 0 9px; gap: 5px; border-radius: 18px; background: #f4a50a; color: #fff; }
.win { width: 42px; height: 45px; justify-content: center; color: #515b74; }
.win .i { width: 20px; height: 20px; }
.login + .win { border-left: 1px solid #cfd1d8; height: 30px; width: 47px; }

/* menu bar */
.menubar { flex: none; display: flex; align-items: center; height: 56px; }
.file { height: 36px; padding: 0 16px 0 22px; gap: 7px; border-right: 1px solid #e4e5e9; }
.quick { display: flex; gap: 13px; height: 36px; padding: 0 7px 0 13px; border-right: 1px solid #e4e5e9; color: #4a4e58; }
.quick button { gap: 4px; }
.quick .dim { color: #b6b8bd; }
.menus { display: flex; align-items: center; padding-left: 9px; }
.menu { height: 30px; padding: 0 19px; }
.menu.wide { padding: 0 23px; }
.menu.active { margin-right: 6px; padding: 0 14px; border-radius: 15px; background: #4890ee; color: #fff; font-weight: 700; }
.search { display: flex; align-items: center; flex: 0 1 224px; min-width: 0; gap: 3px; padding-left: 18px; }
.search input { flex: 1; min-width: 0; padding: 0; border: 0; outline: 0; background: none; }
.search input::placeholder { color: #7c8497; opacity: 1; }
.share { display: flex; gap: 16px; height: 30px; margin-left: auto; padding-right: 13px; border-right: 1px solid #e4e5e9; }
.share button { gap: 6px; }
.share .i { color: #5c6372; }
.more { margin: 0 15px 0 13px; }
.fold { margin-right: 20px; }
.more, .fold { color: #5c6372; }

/* ribbon */
.ribbon { flex: none; display: flex; height: 99px; border-bottom: 1px solid #dfe0e4; }
.group { position: relative; flex: none; padding-top: 3px; border-right: 1px solid #ebecef; }
.launch { position: absolute; right: 6px; bottom: 5px; width: 8px; height: 8px; }
.g-clip { display: flex; gap: 14px; width: 232px; padding-left: 19px; }
.g-font { width: 451px; padding-left: 7px; }
.g-para { width: 371px; padding-left: 13px; }
.g-style { width: 430px; padding: 3px 7px 0; }
.g-tools { display: flex; gap: 15px; padding-right: 14px; padding-left: 14px; }
.big { flex-direction: column; align-self: flex-start; }
.big > span { display: flex; align-items: center; gap: 3px; height: 36px; }
.bi { width: 36px; height: 36px; margin: 3px 0 1px; fill: none; stroke: #3b3f49; stroke-width: 1.5; }
.pair, .line { display: flex; }
.pair { flex-direction: column; gap: 3px; }
.line { height: 36px; gap: 7px; }
.row { display: flex; align-items: center; gap: 13px; height: 36px; margin-bottom: 3px; }
.row.tight { gap: 12px; }
.row.under { padding-left: 6px; }
.ib { height: 36px; margin: 0 -6px; padding: 0 6px; gap: 3px; border-radius: 3px; }
.ib.on, .v.on { background: #d9dde5; }
.bar { width: 1px; height: 30px; margin-right: -4px; background: #e4e5e9; }
.pinyin { display: flex; flex-direction: column; align-items: center; width: 24px; font-size: 14px; line-height: 14px; }
.pinyin b { font-weight: 500; }
.fontbox { display: flex; width: 272px; height: 36px; border: 1px solid #dcdde1; border-radius: 2px; }
.sel { display: flex; align-items: center; padding: 0 3px; }
.sel-name { width: 172px; border-right: 1px solid #dcdde1; }
.sel-size { flex: 1; }
.sel select { flex: 1; min-width: 0; padding: 0; border: 0; outline: 0; background: none; appearance: none; }
.gallery { display: flex; height: 77px; border: 1px solid #dcdde1; border-radius: 2px; }
.style { flex-direction: column; flex: 1; min-width: 0; padding: 0 3px; }
.sample { width: 100%; height: 45px; overflow: hidden; text-align: left; color: #000; line-height: 50px; }
.s-body { font-family: "Liberation Serif", serif; font-size: 21px; }
.s-h1 { font-family: "Liberation Serif", serif; font-size: 44px; font-weight: 700; }
.s-h2 { font-family: "Liberation Sans", sans-serif; font-size: 31px; font-weight: 700; }
.s-h3 { font-family: "Liberation Serif", serif; font-size: 31px; font-weight: 700; }
.spin { display: flex; flex-direction: column; width: 23px; border-left: 1px solid #e4e5e9; }
.spin button { flex: 1; justify-content: center; }
.spin button + button { border-top: 1px solid #e4e5e9; }

/* document */
.workspace { flex: 1; min-height: 0; display: flex; background: #f3f4f9; }
.canvas { position: relative; flex: 1; display: flex; flex-direction: column; align-items: center; gap: 28px; overflow: hidden; }
.page { flex: none; width: 62%; min-width: 1190px; background: #fff; box-shadow: 0 4px 16px 2px rgba(50, 52, 62, .24); }
.first { padding: 514px 78px 74px 122px; }
.page-foot { display: flex; justify-content: space-between; font: 18px/20px "Liberation Serif", serif; color: #777; }
.crop-left, .crop-right { width: 37px; height: 36px; margin-top: 10px; border-top: 1px solid #c4c5c8; }
.crop-left { border-right: 1px solid #c4c5c8; }
.crop-right { border-left: 1px solid #c4c5c8; }
.second { flex: 1; display: flex; align-items: flex-end; padding: 0 114px 0 158px; }
.second i { flex: 1; height: 8px; border: solid #c4c5c8; border-width: 0 1px; }
.float { position: absolute; top: 28px; right: 175px; display: flex; flex-direction: column; gap: 12px; width: 150px; color: #15171b; }
.eject { justify-content: center; width: 36px; height: 38px; border-radius: 4px; background: #f7f7f9; box-shadow: 0 0 4px rgba(0, 0, 0, .22); }
.card { height: 48px; gap: 8px; border-radius: 5px; background: #fff; box-shadow: 0 1px 6px rgba(0, 0, 0, .14); }
.badge { display: flex; align-items: center; justify-content: center; width: 47px; height: 48px; padding-left: 2px; border-radius: 5px 0 0 5px; color: #fff; }
.violet .badge { background: #8b88fb; }
.azure .badge { background: #33a4e8; }
.scroller { flex: none; display: flex; flex-direction: column; align-items: center; width: 21px; padding-bottom: 3px; background: #e8e8f0; }
.ruler { justify-content: center; width: 21px; height: 26px; margin-bottom: 4px; background: #f6f7fa; }
.pad { justify-content: center; width: 19px; height: 22px; border-radius: 8px; background: #c5c7cf; }
.jump { height: 28px; }
.track { position: relative; flex: 1; width: 100%; }
.thumb { position: absolute; top: 70%; left: 1px; width: 19px; height: 55px; border-radius: 9px; background: #d4d5dd; }
.meter { position: absolute; top: 24%; left: 6px; width: 12px; height: 85px; border-radius: 5px; background: linear-gradient(#5a5b60 65px, #3d6a4a 65px); }
.meter::after { content: ""; position: absolute; inset: 65px 2px 2px; background: repeating-linear-gradient(#7fc78d 0 1px, transparent 1px 4px); }
.cursor { position: absolute; right: 0; top: 500px; }

/* status bar */
.statusbar { flex: none; display: flex; align-items: center; height: 43px; border-top: 1px solid #dfe0e6; background: #f3f4f9; }
.stat { flex: none; height: 24px; gap: 4px; white-space: nowrap; border-right: 1px solid #dfe0e6; }
.s1 { width: 119px; padding-left: 14px; }
.s2 { width: 121px; padding-left: 13px; }
.s3 { width: 129px; padding-left: 13px; }
.s4 { padding: 0 14px 0 13px; border: 0; }
.s5 { padding: 0 7px 0 14px; }
.views { display: flex; align-items: center; margin-left: auto; padding-right: 23px; color: #3b404e; }
.v { justify-content: center; width: 36px; height: 36px; margin-right: 3px; border-radius: 2px; }
.vs { width: 1px; height: 24px; margin: 0 11px 0 6px; background: #dfe0e6; }
.zoom { gap: 6px; margin: 0 14px 0 4px; color: #555b69; }
.range { width: 208px; height: 20px; margin: 0 13px; appearance: none; background: linear-gradient(90deg, #4c505b 49%, #c9cbd2 49%) center / 100% 1px no-repeat; }
.range::-webkit-slider-thumb { appearance: none; width: 19px; height: 19px; border: 2px solid #4c505b; border-radius: 50%; background: #eff0f2; }
.z:last-child { margin-left: 13px; }

/* taskbar */
.taskbar { flex: none; display: flex; gap: 2px; height: 60px; background: linear-gradient(90deg, #26363e, #22333c 40%, #22323a 62%, #27292b 74%, #27292b 78%, #1c2931 84%, #1e2a31); color: #fff; }
.app { justify-content: center; width: 73px; border-bottom: 3px solid transparent; border-top: 3px solid transparent; }
.app.apart { margin-left: 6px; }
.open { background: linear-gradient(#7db4e4, #7db4e4) center bottom / 61px 3px no-repeat border-box; }
.current { border-color: #515d65 transparent #7db4e4; background: #515d65; }
.tray { display: flex; align-items: center; margin-left: auto; }
.temp { position: relative; display: flex; flex-direction: column; align-items: center; width: 72px; margin-right: 1px; }
.temp svg { position: absolute; left: 19px; top: 11px; }
.ti { display: flex; align-items: center; justify-content: center; width: 36px; }
.ti.apart { margin-left: 6px; }
.clock { position: relative; display: flex; flex-direction: column; align-items: center; width: 94px; margin-left: 18px; }
.clock i { position: absolute; top: -1px; right: -8px; width: 6px; height: 6px; border-radius: 50%; background: #e8131c; }
.notice { position: relative; margin-left: 27px; padding-right: 10px; }
.notice b { position: absolute; left: 16px; top: 11px; width: 20px; height: 20px; background: #d90c0c; font-size: 14px; font-weight: 400; line-height: 20px; text-align: center; }
.edge { width: 1px; height: 60px; margin: 0 6px 0 9px; background: #6d767c; }
```
